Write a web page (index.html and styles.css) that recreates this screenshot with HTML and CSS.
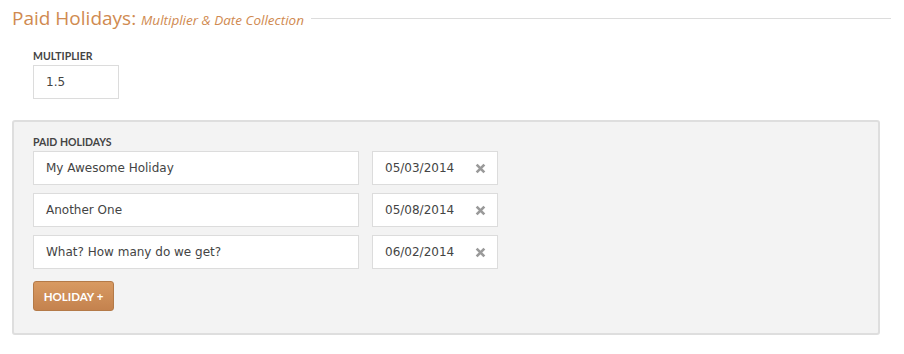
FILE: index.html
```html
<!DOCTYPE html>
<html>
<head>
  <title>Paid Holidays</title>
  <link rel="stylesheet" href="styles.css">
</head>
<body>
  <div class="legend">
    <div class="legend-title">Paid Holidays: <em>Multiplier &amp; Date Collection</em></div>
    <div class="legend-rule"></div>
  </div>

  <div class="field multiplier">
    <label class="field-label">MULTIPLIER</label>
    <div class="input input-short">1.5</div>
  </div>

  <section class="panel">
    <label class="field-label">PAID HOLIDAYS</label>
    <div class="holiday-list">
      <div class="holiday-row">
        <div class="input input-name">My Awesome Holiday</div>
        <div class="input input-date">05/03/2014 <svg class="remove" viewBox="0 0 10 10"><path d="M1.5 1.5 L8.5 8.5 M8.5 1.5 L1.5 8.5"/></svg></div>
      </div>
      <div class="holiday-row">
        <div class="input input-name">Another One</div>
        <div class="input input-date">05/08/2014 <svg class="remove" viewBox="0 0 10 10"><path d="M1.5 1.5 L8.5 8.5 M8.5 1.5 L1.5 8.5"/></svg></div>
      </div>
      <div class="holiday-row">
        <div class="input input-name">What? How many do we get?</div>
        <div class="input input-date">06/02/2014 <svg class="remove" viewBox="0 0 10 10"><path d="M1.5 1.5 L8.5 8.5 M8.5 1.5 L1.5 8.5"/></svg></div>
      </div>
    </div>
    <button class="button">HOLIDAY +</button>
  </section>
</body>
</html>
```

FILE: styles.css
```css
body {
  margin: 0;
  padding: 0;
  background: #fff;
  font-family: "Open Sans", "Lato", sans-serif;
  color: #555;
}

.legend {
  display: flex;
  align-items: center;
  padding: 5px 13px 0 12px;
}

.legend-title {
  font-size: 19px;
  color: #d08a50;
  white-space: nowrap;
}

.legend-title em {
  font-size: 13.5px;
  font-style: italic;
}

.legend-rule {
  flex: 1;
  border-top: 1px solid #dcdcdc;
  margin-left: 7px;
  margin-top: 1px;
}

.field-label {
  display: block;
  font-family: "Lato", sans-serif;
  font-size: 10.5px;
  font-weight: 700;
  color: #444;
  margin-bottom: 3px;
}

.multiplier {
  padding: 19px 0 0 33px;
}

.input {
  box-sizing: border-box;
  height: 34px;
  background: #fff;
  border: 1px solid #dcdcdc;
  font-family: "DejaVu Sans", sans-serif;
  font-size: 12px;
  color: #444;
  padding: 0 12px;
  display: flex;
  align-items: center;
}

.input-short {
  width: 86px;
}

.panel {
  margin: 21px 0 0 12px;
  width: 868px;
  box-sizing: border-box;
  background: #f3f3f3;
  border: 2px solid #dedede;
  border-radius: 3px;
  padding: 14px 19px 22px;
}

.holiday-list {
  display: flex;
  flex-direction: column;
  gap: 8px;
}

.holiday-row {
  display: flex;
  gap: 13px;
}

.input-name {
  width: 326px;
}

.input-date {
  width: 126px;
  justify-content: space-between;
}

.remove {
  width: 11px;
  height: 11px;
  margin-right: -1px;
  stroke: #9a9a9a;
  stroke-width: 2.4;
  fill: none;
}

.button {
  display: block;
  margin-top: 12px;
  height: 30px;
  width: 81px;
  padding: 0;
  border: 1px solid #b47a48;
  border-radius: 3px;
  background: linear-gradient(#d89a62, #c4824e);
  color: #fff;
  font-family: "Lato", sans-serif;
  font-weight: 700;
  font-size: 11.5px;
  cursor: pointer;
}
```
